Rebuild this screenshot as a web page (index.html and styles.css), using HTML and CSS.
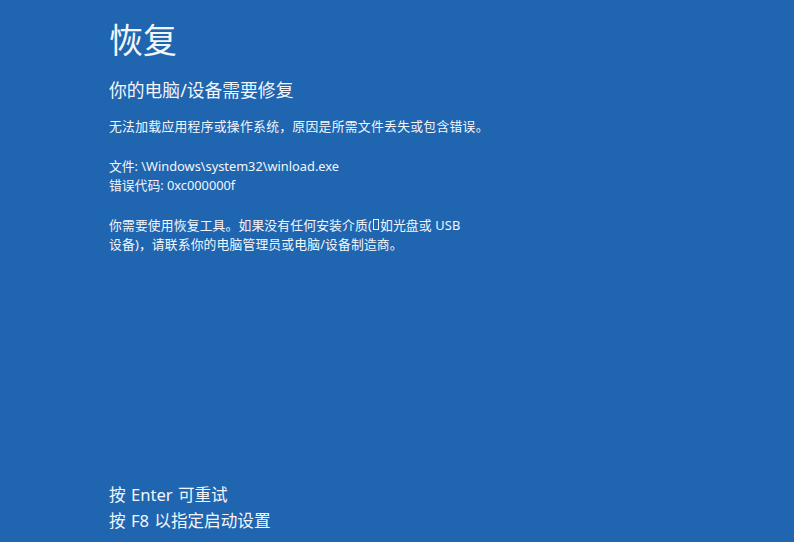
FILE: index.html
```html
<!DOCTYPE html>
<html lang="zh-CN">
<head>
<meta charset="utf-8">
<title>恢复</title>
<link rel="stylesheet" href="styles.css">
</head>
<body>
<main class="screen">
  <h1 class="title">恢复</h1>
  <h2 class="subtitle">你的电脑/设备需要修复</h2>
  <p class="text msg">无法加载应用程序或操作系统，原因是所需文件丢失或包含错误。</p>
  <p class="text info">文件: \Windows\system32\winload.exe<br>错误代码: 0xc000000f</p>
  <p class="text para">你需要使用恢复工具。如果没有任何安装介质(<span class="tofu"></span>如光盘或 USB<br>设备)，请联系你的电脑管理员或电脑/设备制造商。</p>
  <div class="keys">
    <div>按 Enter 可重试</div>
    <div>按 F8 以指定启动设置</div>
  </div>
</main>
</body>
</html>
```

FILE: styles.css
```css
html, body {
  margin: 0;
  padding: 0;
  background: #1f65b0;
}
.screen {
  box-sizing: border-box;
  height: 542px;
  padding: 20px 0 8px 109px;
  display: flex;
  flex-direction: column;
  color: #f2f6fb;
  font-family: "Noto Sans", "Noto Sans CJK SC", sans-serif;
}
.title {
  margin: 0;
  font-size: 34px;
  line-height: 40px;
  font-weight: 400;
}
.subtitle {
  margin: 18px 0 0;
  font-size: 17.8px;
  line-height: 24px;
  font-weight: 400;
}
.text {
  margin: 0;
  font-size: 12.8px;
  line-height: 19.5px;
}
.msg { margin-top: 15px; letter-spacing: 0.3px; }
.info { margin-top: 20px; }
.para { margin-top: 20px; letter-spacing: 0.15px; }
.tofu {
  display: inline-block;
  width: 4px;
  height: 9px;
  border: 1px solid #f2f6fb;
  margin: 0 1px;
}
.keys {
  margin-top: auto;
  font-size: 16.6px;
  line-height: 26px;
  word-spacing: 1px;
}
```
